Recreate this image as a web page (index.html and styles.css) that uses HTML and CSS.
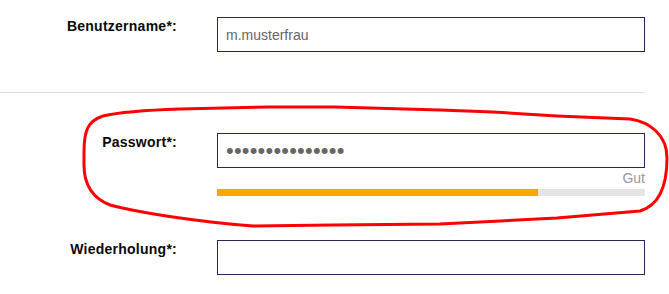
FILE: index.html
```html
<!DOCTYPE html>
<html lang="de">
<head>
<meta charset="utf-8">
<title>Registrierung</title>
<link rel="stylesheet" href="styles.css">
</head>
<body>
<form class="form">
  <div class="row">
    <label class="label" for="user">Benutzername*:</label>
    <div class="field">
      <input class="input" id="user" type="text" value="m.musterfrau">
    </div>
  </div>
  <hr class="divider">
  <div class="row">
    <label class="label" for="pw">Passwort*:</label>
    <div class="field">
      <input class="input input-pw" id="pw" type="password" value="geheim12345678x">
      <div class="strength-text">Gut</div>
      <div class="meter"><div class="meter-fill" style="width:75%"></div></div>
    </div>
  </div>
  <div class="row row-repeat">
    <label class="label" for="pw2">Wiederholung*:</label>
    <div class="field">
      <input class="input" id="pw2" type="password" value="">
    </div>
  </div>
  <svg class="annotation" width="669" height="294" viewBox="0 0 669 294" aria-hidden="true">
    <path d="M 84 152 C 84 130, 88 121, 103 116 C 120 112, 150 110, 180 109 L 270 107 L 335 107 L 440 110 L 493 112 L 557 116 L 630 119 C 650 122, 667 135, 667 158 C 667 185, 660 205, 640 211 L 557 218 L 440 224 L 333 225 L 253 226 C 200 222, 140 213, 110 205 C 92 198, 84 185, 84 165 Z" fill="none" stroke="#ff0000" stroke-width="3" stroke-linejoin="round"/>
  </svg>
</form>
</body>
</html>
```

FILE: styles.css
```css
html, body {
  margin: 0;
  padding: 0;
  background: #ffffff;
}

.form {
  position: relative;
  width: 645px;
  padding-top: 17px;
  font-family: "Liberation Sans", Arial, sans-serif;
  font-size: 14px;
  line-height: 16px;
  color: #111111;
}

.row {
  display: grid;
  grid-template-columns: 177px 428px;
  column-gap: 40px;
  align-items: start;
}

.label {
  text-align: right;
  font-weight: bold;
  letter-spacing: 0.25px;
  padding-top: 1px;
  color: #0a0a0a;
}

.field {
  display: flex;
  flex-direction: column;
}

.input {
  box-sizing: border-box;
  width: 428px;
  height: 35px;
  margin: 0;
  padding: 0 8px;
  border: 1px solid #2e2458;
  border-radius: 0;
  background: #ffffff;
  font-family: "Liberation Sans", Arial, sans-serif;
  font-size: 14px;
  color: #666666;
  outline: none;
}

.input-pw {
  font-size: 22px;
  letter-spacing: 0.2px;
  padding-left: 8px;
  color: #666666;
}

.divider {
  border: 0;
  border-top: 1px solid #dddddd;
  height: 0;
  margin: 40px 0 40px 0;
}

.strength-text {
  margin-top: 2px;
  text-align: right;
  color: #999999;
}

.meter {
  margin-top: 3px;
  height: 7px;
  background: #e4e4e4;
}

.meter-fill {
  height: 100%;
  background: #ffa500;
}

.row-repeat {
  margin-top: 44px;
}

.annotation {
  position: absolute;
  left: 0;
  top: 0;
  pointer-events: none;
}
```
